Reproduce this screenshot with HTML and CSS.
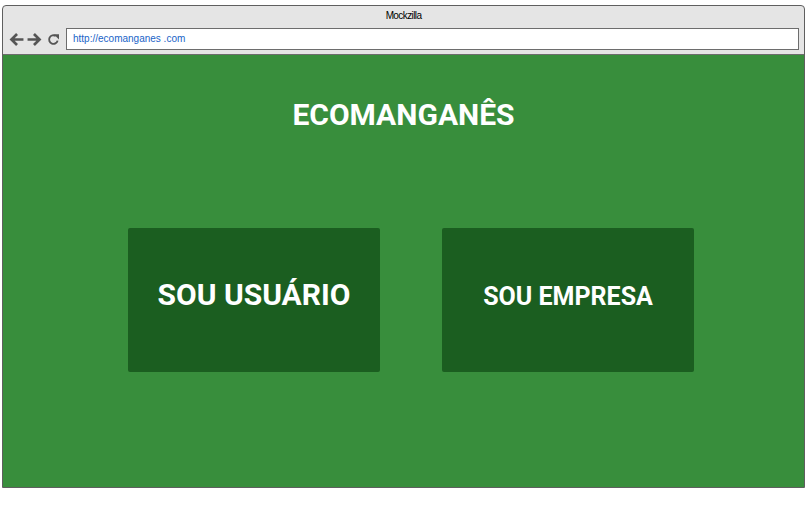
FILE: index.html
```html
<!DOCTYPE html>
<html lang="pt">
<head>
<meta charset="utf-8">
<title>Ecomanganês</title>
<link rel="stylesheet" href="styles.css">
</head>
<body>
<div class="window">
  <div class="titlebar">Mockzilla</div>
  <div class="toolbar">
    <svg class="icon" width="15" height="15" viewBox="0 0 14 14"><path d="M13.5 7H2.5M7.5 1.8L2.3 7l5.2 5.2" fill="none" stroke="#555" stroke-width="2.5"/></svg>
    <svg class="icon fwd" width="15" height="15" viewBox="0 0 14 14"><path d="M0.5 7h11M6.5 1.8L11.7 7l-5.2 5.2" fill="none" stroke="#555" stroke-width="2.5"/></svg>
    <svg class="icon reload" width="13" height="13" viewBox="0 0 13 13"><path d="M10.6 7.6A4.3 4.3 0 1 1 8.8 3" fill="none" stroke="#555" stroke-width="1.9"/><path d="M6.8 1.2h5.2v5.2z" fill="#555"/></svg>
    <div class="address">http://ecomanganes .com</div>
  </div>
  <div class="content">
    <h1 class="brand">ECOMANGANÊS</h1>
    <div class="cards">
      <div class="card"><span class="card-big">SOU USUÁRIO</span></div>
      <div class="card"><span class="card-small">SOU EMPRESA</span></div>
    </div>
  </div>
</div>
</body>
</html>
```
FILE: styles.css
```css
html, body {
  margin: 0;
  padding: 0;
  background: #fff;
}
body {
  padding: 5px 0 0 2px;
  font-family: Roboto, "Liberation Sans", sans-serif;
}
.window {
  width: 801px;
  height: 481px;
  border: 1px solid #5f5f5f;
  border-radius: 4px 4px 0 0;
  background: #e5e5e5;
  display: flex;
  flex-direction: column;
  overflow: hidden;
}
.titlebar {
  height: 20px;
  line-height: 20px;
  text-align: center;
  font-family: "Liberation Sans", Arial, sans-serif;
  font-size: 10px;
  letter-spacing: -0.6px;
  color: #000;
}
.toolbar {
  height: 28px;
  display: flex;
  align-items: center;
  padding: 0 5px 0 6px;
  border-bottom: 1px solid #6d6d6d;
}
.icon {
  flex: none;
  margin-right: 3px;
  margin-top: -1px;
}
.fwd {
  margin-right: 5px;
}
.reload {
  margin-right: 6px;
}
.address {
  flex: 1;
  height: 20px;
  line-height: 20px;
  background: #fff;
  border: 1px solid #6d6d6d;
  padding-left: 6px;
  font-family: "Liberation Sans", Arial, sans-serif;
  font-size: 10px;
  color: #1a64c8;
  margin-top: -3px;
}
.content {
  flex: 1;
  background: #388e3c;
  display: flex;
  flex-direction: column;
}
.brand {
  margin: 40px 0 0;
  text-align: center;
  color: #fff;
  font-size: 30px;
  font-weight: 700;
  line-height: 40px;
}
.cards {
  display: flex;
  gap: 62px;
  padding-left: 125px;
  margin-top: 93px;
}
.card {
  width: 252px;
  height: 144px;
  background: #1b5e20;
  border-radius: 2px;
  display: flex;
  align-items: center;
  justify-content: center;
  color: #fff;
  font-weight: 700;
}
.card-big {
  font-size: 30px;
  margin-top: -12px;
}
.card-small {
  font-size: 25px;
  margin-top: -8px;
}
```
